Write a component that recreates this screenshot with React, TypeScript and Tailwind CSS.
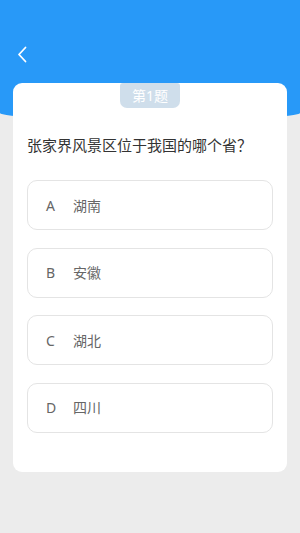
import React from "react";

const options = [
  { k: "A", v: "湖南" },
  { k: "B", v: "安徽" },
  { k: "C", v: "湖北" },
  { k: "D", v: "四川" },
];

export default function App() {
  return (
    <div
      className="w-[300px] h-[533px] bg-[#ececec] overflow-hidden"
      style={{ fontFamily: '"Noto Sans", "Noto Sans CJK SC", sans-serif' }}
    >
      <div className="h-[120px] bg-[#2899f8] rounded-b-[50%_7px] pt-[46px] pl-[17px]">
        <svg width="11" height="17" viewBox="0 0 11 17" fill="none">
          <path d="M8.5 1.5 L2 8.5 L8.5 15.5" stroke="#ffffff" strokeWidth="1.8" strokeLinecap="round" strokeLinejoin="round" />
        </svg>
      </div>
      <div className="mx-[13px] -mt-[37px] h-[389px] bg-white rounded-[9px] flex flex-col">
        <div className="self-center w-[60px] h-[25px] bg-[#cfdeeb] rounded-b-[7px] rounded-t-[3px] flex items-center justify-center text-white text-[14px] leading-none">
          第1题
        </div>
        <div className="mt-[26px] px-[14px] text-[15px] leading-[22px] text-[#333333]">
          张家界风景区位于我国的哪个省？
        </div>
        <div className="mt-[24px] px-[14px] flex flex-col gap-[17.5px]">
          {options.map((o) => (
            <div
              key={o.k}
              className="h-[50px] border border-[#e4e4e4] rounded-[10px] flex items-center pl-[18px] text-[14px] text-[#666666]"
            >
              <span className="w-[27px]">{o.k}</span>
              <span>{o.v}</span>
            </div>
          ))}
        </div>
      </div>
    </div>
  );
}
